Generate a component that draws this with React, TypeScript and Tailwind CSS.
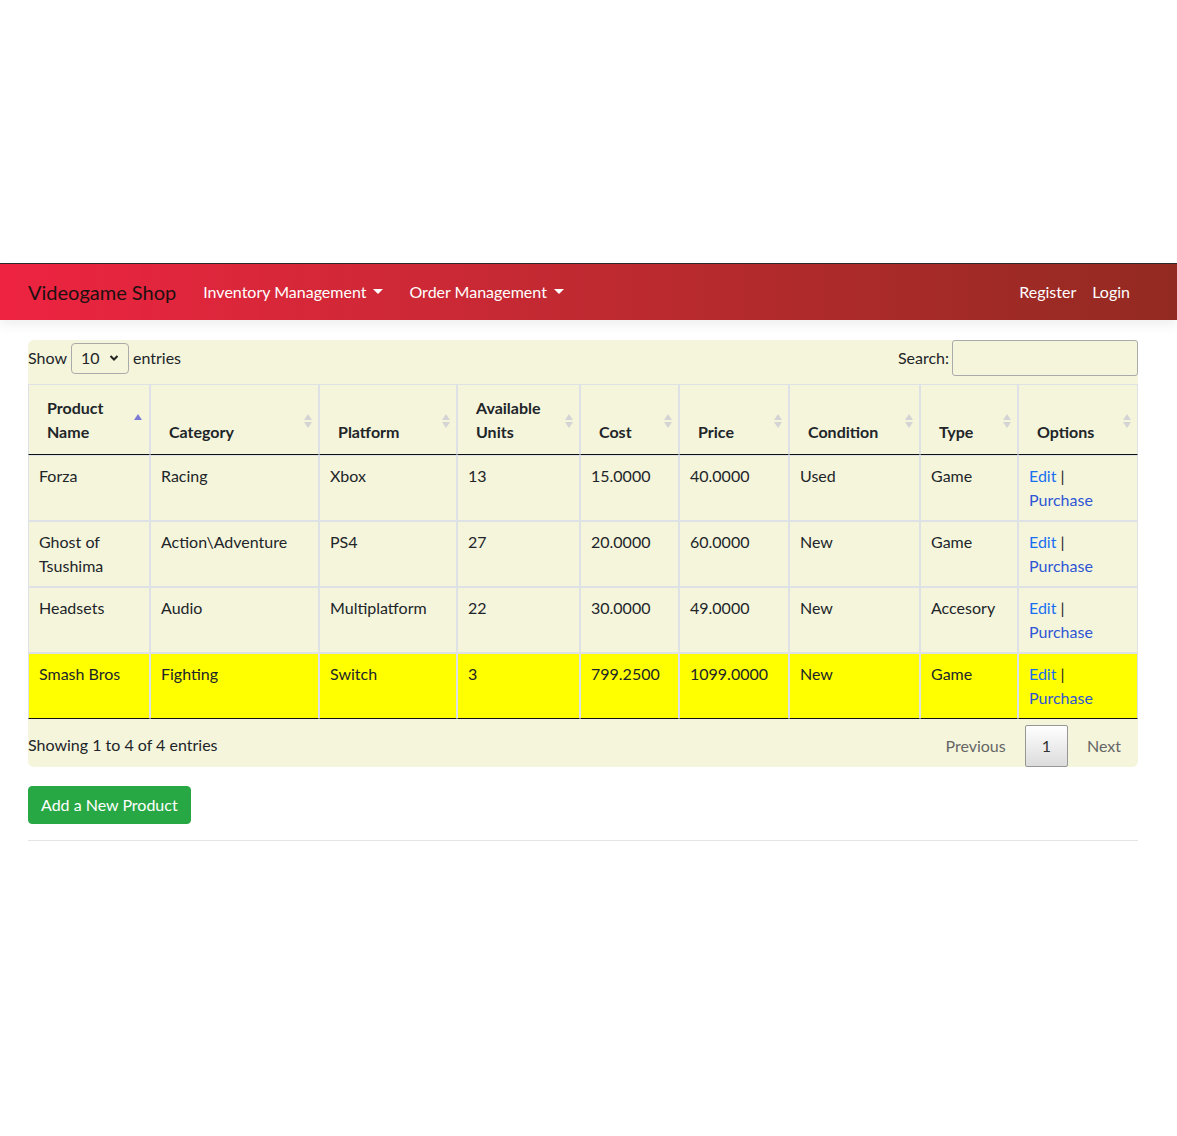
import React from "react";

const font = { fontFamily: "Lato, 'Noto Sans', sans-serif" };

type Row = {
  name: string;
  category: string;
  platform: string;
  units: string;
  cost: string;
  price: string;
  condition: string;
  type: string;
  highlight?: boolean;
};

const rows: Row[] = [
  { name: "Forza", category: "Racing", platform: "Xbox", units: "13", cost: "15.0000", price: "40.0000", condition: "Used", type: "Game" },
  { name: "Ghost of Tsushima", category: "Action\\Adventure", platform: "PS4", units: "27", cost: "20.0000", price: "60.0000", condition: "New", type: "Game" },
  { name: "Headsets", category: "Audio", platform: "Multiplatform", units: "22", cost: "30.0000", price: "49.0000", condition: "New", type: "Accesory" },
  { name: "Smash Bros", category: "Fighting", platform: "Switch", units: "3", cost: "799.2500", price: "1099.0000", condition: "New", type: "Game", highlight: true },
];

function SortIcon({ active }: { active?: boolean }) {
  if (active) {
    return (
      <svg className="absolute right-[7px] top-[29px]" width="8" height="14" viewBox="0 0 8 14">
        <polygon points="4,0 8,6 0,6" fill="#7b7bd6" />
      </svg>
    );
  }
  return (
    <svg className="absolute right-[6px] top-[29px]" width="8" height="14" viewBox="0 0 8 14">
      <polygon points="4,0 8,6 0,6" fill="#d4d4d4" />
      <polygon points="0,8 8,8 4,14" fill="#d4d4d4" />
    </svg>
  );
}

function Caret() {
  return (
    <span className="ml-[7px] inline-block align-middle border-l-[5px] border-r-[5px] border-t-[5px] border-l-transparent border-r-transparent border-t-white relative -top-[2px]" />
  );
}

const headers: { label: React.ReactNode; w: string; active?: boolean }[] = [
  { label: <>Product<br />Name</>, w: "w-[122px]", active: true },
  { label: "Category", w: "w-[169px]" },
  { label: "Platform", w: "w-[138px]" },
  { label: <>Available<br />Units</>, w: "w-[123px]" },
  { label: "Cost", w: "w-[99px]" },
  { label: "Price", w: "w-[110px]" },
  { label: "Condition", w: "w-[131px]" },
  { label: "Type", w: "w-[98px]" },
  { label: "Options", w: "w-[120px]" },
];

export default function App() {
  return (
    <div className="min-h-[1136px] bg-white text-[#212529] text-[16px] leading-[24px]" style={font}>
      <div className="h-[263px]" />
      <nav className="h-[57px] border-t border-[#2a2a2a] bg-gradient-to-r from-[#ee2341] to-[#932a21] shadow-[0_6px_10px_rgba(0,0,0,0.06)]">
        <div className="h-full flex items-center px-[28px] mr-[11px]">
          <span className="text-[20px] text-[#1c1010] mr-[19px] leading-[30px]">Videogame Shop</span>
          <span className="text-white px-[8px]">Inventory Management<Caret /></span>
          <span className="text-white px-[8px] ml-[10px]">Order Management<Caret /></span>
          <div className="flex-1" />
          <span className="text-white px-[8px]">Register</span>
          <span className="text-white px-[8px]">Login</span>
        </div>
      </nav>

      <div className="px-[28px] mr-[11px] pt-[20px]">
        <div className="bg-[#f5f5dc] rounded-md w-[1110px]">
          <div className="flex items-center justify-between h-[36px]">
            <div className="flex items-center">
              <span>Show</span>
              <div className="mx-[4px] w-[58px] h-[31px] border border-[#aaa] rounded-[4px] flex items-center justify-between px-[9px] bg-[#f5f5dc]">
                <span>10</span>
                <svg width="10" height="8" viewBox="0 0 10 8">
                  <path d="M1.5 2 L5 5.5 L8.5 2" stroke="#222" strokeWidth="2" fill="none" />
                </svg>
              </div>
              <span>entries</span>
            </div>
            <div className="flex items-center">
              <span>Search:</span>
              <div className="ml-[3px] w-[186px] h-[36px] border border-[#aaa] rounded-[3px] bg-[#f5f5dc]" />
            </div>
          </div>

          <table className="mt-[8px] w-[1110px] table-fixed border-separate border-spacing-0">
            <thead>
              <tr>
                {headers.map((h, i) => (
                  <th
                    key={i}
                    className={`${h.w} relative text-left align-bottom font-bold pt-[11px] pb-[10px] pl-[18px] pr-[18px] border border-[#dee2e6] border-b-[#111]`}
                  >
                    {h.label}
                    <SortIcon active={h.active} />
                  </th>
                ))}
              </tr>
            </thead>
            <tbody>
              {rows.map((r, i) => {
                const last = i === rows.length - 1;
                const cell = `align-top px-[10px] py-[8px] h-[66px] border border-[#dee2e6] ${last ? "border-b-[#111]" : ""} ${r.highlight ? "bg-[#ffff00]" : ""}`;
                return (
                  <tr key={i}>
                    <td className={cell}>{r.name}</td>
                    <td className={cell}>{r.category}</td>
                    <td className={cell}>{r.platform}</td>
                    <td className={cell}>{r.units}</td>
                    <td className={cell}>{r.cost}</td>
                    <td className={cell}>{r.price}</td>
                    <td className={cell}>{r.condition}</td>
                    <td className={cell}>{r.type}</td>
                    <td className={cell}>
                      <span className="text-[#1a6ff0]">Edit</span> |<br />
                      <span className="text-[#2f55d4]">Purchase</span>
                    </td>
                  </tr>
                );
              })}
            </tbody>
          </table>

          <div className="flex justify-between">
            <div className="pt-[14px]">Showing 1 to 4 of 4 entries</div>
            <div className="pt-[6px] flex items-start">
              <span className="px-[16px] py-[8px] border border-transparent text-[#666]">Previous</span>
              <span className="ml-[2px] px-[16px] py-[8px] border border-[#979797] rounded-[2px] bg-gradient-to-b from-white to-[#dcdcdc] text-[#333]">1</span>
              <span className="ml-[2px] px-[16px] py-[8px] border border-transparent text-[#666]">Next</span>
            </div>
          </div>
        </div>

        <button className="mt-[19px] h-[38px] px-[12px] bg-[#28a745] text-white rounded-[4px] border border-[#28a745]">
          Add a New Product
        </button>
        <div className="mt-[16px] w-[1110px] border-t border-[#e5e5e5]" />
      </div>
    </div>
  );
}
